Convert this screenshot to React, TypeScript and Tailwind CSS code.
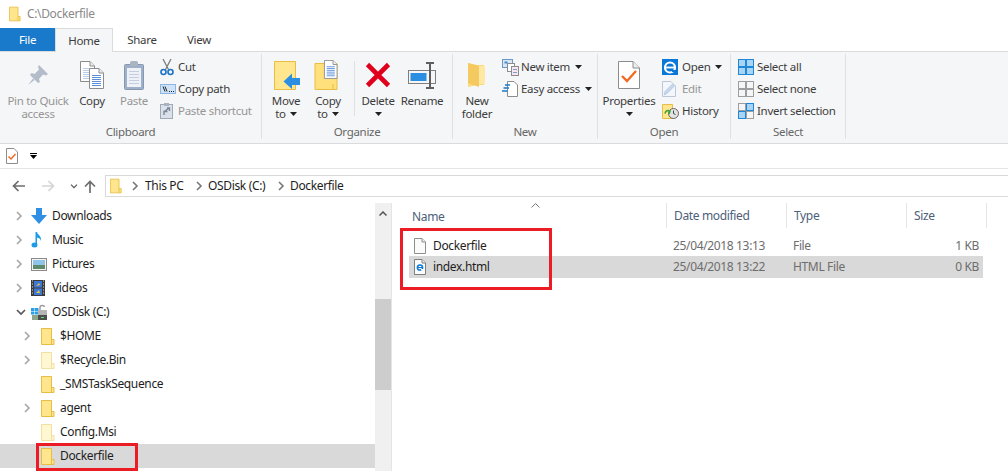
import React from "react";

const Folder = ({ light = false, w = 14, h = 17 }: { light?: boolean; w?: number; h?: number }) => (
  <svg width={w} height={h} viewBox="0 0 14 17" className="shrink-0">
    <path d="M.5 .5H10.5V11.5H13V16.5H.5Z" fill={light ? "#fff6d2" : "#ffe58c"} stroke={light ? "#f2e0a0" : "#e8bd45"} />
    <path d="M10.5 11.5V16.5" stroke={light ? "#f2e0a0" : "#e8bd45"} fill="none" />
  </svg>
);

const Caret = ({ c = "#222" }: { c?: string }) => (
  <svg width="7" height="4" viewBox="0 0 7 4" className="shrink-0"><path d="M0 0H7L3.5 4Z" fill={c} /></svg>
);

const Chev = ({ c = "#a6a6a6" }: { c?: string }) => (
  <svg width="7" height="10" viewBox="0 0 7 10" className="shrink-0"><path d="M1 1L5 5L1 9" fill="none" stroke={c} strokeWidth="1.6" /></svg>
);

const ChevDown = () => (
  <svg width="10" height="7" viewBox="0 0 10 7" className="shrink-0"><path d="M1 1L5 5L9 1" fill="none" stroke="#555" strokeWidth="1.6" /></svg>
);

const Doc = ({ lines = "#5b8fd9" }: { lines?: string }) => (
  <g>
    <path d="M.5.5H10L14.5 5V20.5H.5Z" fill="#fff" stroke="#8c8c8c" />
    <path d="M10 .5V5H14.5" fill="#eee" stroke="#8c8c8c" />
    {[7, 9, 11, 13, 15, 17].map((y) => <path key={y} d={`M3 ${y}.5H12`} stroke={lines} />)}
  </g>
);

const PinIcon = () => (
  <svg width="22" height="22" viewBox="0 0 22 22">
    <path d="M12 1L21 10L19 11.5L16 10.5L12 15L13 18L11 19L3 11L4.5 9L7.5 10L12 5.5L11 3Z" fill="#b3bdca" />
    <path d="M6 14.5L1 21L7.5 16Z" fill="#b3bdca" />
  </svg>
);
const CopyIcon = () => (
  <svg width="25" height="28" viewBox="0 0 25 28">
    <g><Doc lines="#b9cdea" /></g>
    <g transform="translate(9 7)"><Doc /></g>
  </svg>
);
const PasteIcon = () => (
  <svg width="20" height="29" viewBox="0 0 20 29">
    <rect x=".5" y="3.5" width="19" height="25" rx="1" fill="#9fb0c9" stroke="#8798b2" />
    <rect x="3" y="7" width="14" height="19" fill="#eef1f6" />
    {[10, 13, 16, 19, 22].map((y) => <path key={y} d={`M5 ${y}.5H15`} stroke="#c3cfe0" />)}
    <rect x="6" y="0" width="8" height="5" rx="1.5" fill="#aab4c2" />
  </svg>
);
const CutIcon = () => (
  <svg width="14" height="17" viewBox="0 0 14 17">
    <path d="M3 0L8.5 10.5M11 0L5.5 10.5" stroke="#7d7d7d" strokeWidth="1.3" fill="none" />
    <circle cx="3.5" cy="13" r="2.5" fill="none" stroke="#1b72c8" strokeWidth="1.6" />
    <circle cx="10.5" cy="13" r="2.5" fill="none" stroke="#1b72c8" strokeWidth="1.6" />
  </svg>
);
const CopyPathIcon = () => (
  <svg width="16" height="10" viewBox="0 0 16 10">
    <rect x=".5" y=".5" width="15" height="9" fill="#cfe3f8" stroke="#8db7e2" />
    <path d="M3 2.5L5 7.5M5 2.5L7 7.5" stroke="#222" strokeWidth="1" />
    <path d="M9 7.5H10M11 7.5H12M13 7.5H14" stroke="#222" />
  </svg>
);
const PasteShortcutIcon = () => (
  <svg width="13" height="16" viewBox="0 0 13 16">
    <rect x=".5" y="1.5" width="12" height="14" fill="#dbe1ea" stroke="#9fa9b8" />
    <rect x="4" y="0" width="5" height="3" fill="#a9b3c0" />
    <path d="M4 12V8.5H7.5M5 8L8.5 5.5M7 5H9.5V8" stroke="#7a8799" fill="none" strokeWidth="1.4" />
  </svg>
);
const MoveIcon = () => (
  <svg width="27" height="29" viewBox="0 0 27 29">
    <path d="M1.5.5H22.5V28.5H1.5Z" fill="#ffe68f" stroke="#e8bd45" />
    <path d="M27 17H19V12.5L10.5 20.5L19 28V24H27Z" fill="#2b8ee0" />
  </svg>
);
const CopyToIcon = () => (
  <svg width="28" height="30" viewBox="0 0 28 30">
    <path d="M1 3.5H23V29.5H1Z" fill="#ffe07a" stroke="#e8bd45" />
    <path d="M19 24V29.5" stroke="#e8bd45" />
    <g transform="translate(10 0) scale(.9)"><Doc /></g>
  </svg>
);
const DeleteIcon = () => (
  <svg width="26" height="26" viewBox="0 0 26 26"><path d="M2.5 2.5L23.5 23.5M23.5 2.5L2.5 23.5" stroke="#e0001b" strokeWidth="4.6" /></svg>
);
const RenameIcon = () => (
  <svg width="29" height="27" viewBox="0 0 29 27">
    <rect x=".5" y="8.5" width="27" height="13" fill="#f5f6f7" stroke="#7f7f7f" />
    <rect x="2.5" y="11" width="16" height="8" fill="#2b8ee0" />
    <path d="M18 1H26M22 1V26M18 26H26" stroke="#5f5f5f" strokeWidth="2" fill="none" />
  </svg>
);
const NewFolderIcon = () => (
  <svg width="20" height="24" viewBox="0 0 20 24">
    <path d="M1 0L10 2V2H17V22H10L1 24Z" fill="#fbd977" />
    <path d="M1 0L12 3V24L1 20Z" fill="#f4c95f" />
    <path d="M12 3H18V21H12Z" fill="#ffe8a3" />
  </svg>
);
const NewItemIcon = () => (
  <svg width="17" height="17" viewBox="0 0 17 17">
    <rect x=".5" y=".5" width="10" height="8" fill="#d6e7f8" stroke="#6a97c4" />
    <rect x="2.5" y="2.5" width="3" height="2" fill="#4b87c5" />
    <rect x="5.5" y="4.5" width="7" height="8" fill="#fff" stroke="#8c8c8c" />
    <rect x="9.5" y="7.5" width="7" height="9" fill="#f8e6ef" stroke="#8c8c8c" />
    <path d="M11 10.5H15M11 13.5H15" stroke="#7c9ccc" />
  </svg>
);
const EasyIcon = () => (
  <svg width="16" height="16" viewBox="0 0 16 16">
    <path d="M5.5.5H12L15.5 4V15.5H5.5Z" fill="#fff" stroke="#8c8c8c" />
    <path d="M3 4H8M1.5 7H7M0 10H5.5" stroke="#1979ca" strokeWidth="1.3" />
  </svg>
);
const PropIcon = () => (
  <svg width="22" height="28" viewBox="0 0 22 28">
    <path d="M.5.5H15L21.5 7V27.5H.5Z" fill="#fff" stroke="#8c8c8c" />
    <path d="M15 .5V7H21.5" fill="#eee" stroke="#8c8c8c" />
    <path d="M4 15L9 20L18 10" fill="none" stroke="#f26a21" strokeWidth="2.4" />
  </svg>
);
const IeIcon = () => (
  <svg width="16" height="16" viewBox="0 0 16 16">
    <rect width="16" height="16" fill="#0a78d7" />
    <circle cx="8" cy="8.5" r="5" fill="none" stroke="#fff" strokeWidth="2.2" />
    <path d="M3 8.5H13" stroke="#fff" strokeWidth="1.8" />
    <path d="M10 11H16V13H10Z" fill="#0a78d7" />
  </svg>
);
const EditIcon = () => (
  <svg width="14" height="16" viewBox="0 0 14 16">
    <path d="M.5.5H9L13.5 5V15.5H.5Z" fill="#f3f7fd" stroke="#bcc8d8" />
    <path d="M2 14L3 10.5L10.5 3L12.5 5L5 12.5Z" fill="#c5d6ec" stroke="#a7bcd8" strokeWidth=".6" />
  </svg>
);
const HistoryIcon = () => (
  <svg width="17" height="15" viewBox="0 0 17 15">
    <path d="M.5.5H10.5V14.5H.5Z" fill="#ffe68f" stroke="#e8bd45" />
    <circle cx="11.5" cy="9.5" r="5" fill="#e3e3e3" stroke="#666" />
    <path d="M11.5 6.5V9.5L13.5 10.5" stroke="#444" fill="none" />
    <path d="M3 9.5C3.5 6.5 6 6 8 7L7 10" stroke="#3aa535" strokeWidth="1.6" fill="none" />
  </svg>
);
const GridIcon = ({ mode }: { mode: "all" | "none" | "inv" }) => {
  const blue = (on: boolean) => on ? { fill: "#a9d4f5", stroke: "#1f87d8" } : { fill: "#f5f6f7", stroke: "#9e9e9e" };
  const cells: [number, number, boolean][] =
    mode === "all" ? [[0, 0, true], [8, 0, true], [0, 8, true], [8, 8, true]]
    : mode === "none" ? [[0, 0, false], [8, 0, false], [0, 8, false], [8, 8, false]]
    : [[0, 0, false], [8, 0, true], [0, 8, true], [8, 8, false]];
  return (
    <svg width="16" height="16" viewBox="0 0 16 16">
      {cells.map(([x, y, on]) => <rect key={`${x}${y}`} x={x + .5} y={y + .5} width="7" height="7" {...blue(on)} />)}
    </svg>
  );
};
const QuickProp = () => (
  <svg width="12" height="16" viewBox="0 0 12 16">
    <path d="M.5.5H8L11.5 4V15.5H.5Z" fill="#fff" stroke="#8c8c8c" />
    <path d="M2.5 8.5L5 11L9.5 6" fill="none" stroke="#f26a21" strokeWidth="1.5" />
  </svg>
);
const ArrowL = ({ c }: { c: string }) => (
  <svg width="13" height="12" viewBox="0 0 13 12"><path d="M13 6H1.5M6.5 1L1.5 6L6.5 11" fill="none" stroke={c} strokeWidth="1.7" /></svg>
);
const ArrowR = ({ c }: { c: string }) => (
  <svg width="13" height="12" viewBox="0 0 13 12"><path d="M0 6H11.5M6.5 1L11.5 6L6.5 11" fill="none" stroke={c} strokeWidth="1.7" /></svg>
);
const ArrowU = () => (
  <svg width="12" height="13" viewBox="0 0 12 13"><path d="M6 13V1.5M1 6.5L6 1.5L11 6.5" fill="none" stroke="#6d6d6d" strokeWidth="1.7" /></svg>
);
const Downloads = () => (
  <svg width="16" height="16" viewBox="0 0 16 16"><path d="M5 0H11V7H16L8 16L0 7H5Z" fill="#2f8fe3" /></svg>
);
const Music = () => (
  <svg width="12" height="16" viewBox="0 0 12 16">
    <path d="M4.5 0H6C6.5 3 11 4 10 9C9.5 6.5 8 6 6 5.5V13H4.5Z" fill="#1c9be6" />
    <ellipse cx="3.5" cy="13" rx="3" ry="2.5" fill="#1c9be6" />
  </svg>
);
const Pictures = () => (
  <svg width="16" height="13" viewBox="0 0 16 13">
    <rect x=".5" y=".5" width="15" height="12" fill="#f4f4f4" stroke="#8a8a8a" />
    <rect x="2" y="2" width="12" height="5" fill="#8fc3ea" />
    <rect x="2" y="7" width="12" height="4" fill="#5d8a6a" />
  </svg>
);
const Videos = () => (
  <svg width="14" height="16" viewBox="0 0 14 16">
    <rect width="14" height="16" fill="#3b3b3b" />
    <rect x="3" y="1" width="8" height="6.5" fill="#3f78d4" />
    <rect x="3" y="8.5" width="8" height="6.5" fill="#3f78d4" />
    <path d="M5 6L8 3L9 5ZM5 13L8 10L9 13Z" fill="#e9c63c" />
    {[1, 4, 7, 10, 13].map((y) => <path key={y} d={`M1 ${y}H2M12 ${y}H13`} stroke="#ddd" />)}
  </svg>
);
const Disk = () => (
  <svg width="17" height="16" viewBox="0 0 17 16">
    <rect x="0" y="4" width="3.5" height="3" fill="#29a0e8" />
    <rect x="4" y="4" width="3.5" height="3" fill="#29a0e8" />
    <rect x="0" y="7.5" width="3.5" height="3" fill="#29a0e8" />
    <rect x="4" y="7.5" width="3.5" height="3" fill="#29a0e8" />
    <path d="M9 6V3.5C9 1 13.5 1 13.5 3" fill="none" stroke="#9a9a9a" strokeWidth="1.4" />
    <rect x="7" y="6" width="9" height="5" fill="#b5b5b5" />
    <rect x="1" y="11" width="15" height="5" fill="#4d4d4d" />
    <rect x="1" y="11" width="6" height="5" fill="#8da58a" />
    <rect x="10" y="13" width="3" height="1" fill="#5fe07a" />
  </svg>
);
const FileBlank = () => (
  <svg width="12" height="16" viewBox="0 0 12 16">
    <path d="M.5.5H8L11.5 4V15.5H.5Z" fill="#fbfbfb" stroke="#8f8f8f" />
    <path d="M8 .5V4H11.5" fill="#eee" stroke="#8f8f8f" />
  </svg>
);
const FileHtml = () => (
  <svg width="12" height="16" viewBox="0 0 12 16">
    <path d="M.5.5H8L11.5 4V15.5H.5Z" fill="#fbfbfb" stroke="#7f7f7f" />
    <path d="M8 .5V4H11.5" fill="#eee" stroke="#7f7f7f" />
    <circle cx="6" cy="8.5" r="2.6" fill="none" stroke="#0a78d7" strokeWidth="1.5" />
    <path d="M3.5 8.5H8.5" stroke="#0a78d7" />
    <path d="M7 10H9V11.5H7Z" fill="#fbfbfb" />
  </svg>
);

const Big = ({ w, icon, lines, off, caret, ml = 0 }: { w: string; icon: React.ReactNode; lines: string[]; off?: boolean; caret?: boolean | "below"; ml?: number }) => (
  <div className={`flex flex-col items-center shrink-0 ${w} ${off ? "text-[#959595]" : "text-[#3c3c3c]"}`} style={ml ? { marginLeft: ml } : undefined}>
    <div className="h-[38px] flex items-center justify-center">{icon}</div>
    {lines.map((l, i) => (
      <div key={l} className="h-[13px] leading-[13px] whitespace-nowrap flex items-center gap-1">
        {l}{caret === true && i === lines.length - 1 && <Caret />}
      </div>
    ))}
    {caret === "below" && <div className="h-[13px] flex items-center"><Caret /></div>}
  </div>
);

const Small = ({ icon, label, off, caret, iw = 19 }: { icon: React.ReactNode; label: string; off?: boolean; caret?: boolean; iw?: number }) => (
  <div className={`h-[22px] flex items-center whitespace-nowrap ${off ? "text-[#959595]" : "text-[#3c3c3c]"}`}>
    <div className="flex items-center shrink-0" style={{ width: iw }}>{icon}</div>
    <span>{label}</span>
    {caret && <span className="ml-[5px]"><Caret /></span>}
  </div>
);

const Group = ({ w, label, children, sep = true }: { w: string; label: string; children: React.ReactNode; sep?: boolean }) => (
  <div className={`${w} shrink-0 flex flex-col h-[85px] mt-[2px] ${sep ? "border-r border-[#dfe0e1]" : ""}`}>
    <div className="h-[71px] flex pt-[2px]">{children}</div>
    <div className="text-center text-[#666] leading-[14px] h-[14px] mt-[3px]">{label}</div>
  </div>
);

const NavRow = ({ level, chev, open, icon, label, sel }: { level: 1 | 2; chev?: boolean; open?: boolean; icon: React.ReactNode; label: string; sel?: boolean }) => (
  <div className={`h-6 flex items-center text-[#1e1e1e] whitespace-nowrap ${sel ? "bg-[#d9d9d9]" : ""}`}>
    <div className={`${level === 1 ? "w-[31px] pl-[16px]" : "w-[41px] pl-[24px]"} shrink-0 flex items-center`}>
      {chev && (open ? <ChevDown /> : <Chev />)}
    </div>
    <div className={`${level === 1 ? "w-[21px]" : "w-[19px]"} shrink-0 flex items-center`}>{icon}</div>
    <span>{label}</span>
  </div>
);

const FileRow = ({ icon, name, date, type, size, sel }: { icon: React.ReactNode; name: string; date: string; type: string; size: string; sel?: boolean }) => (
  <div className={`h-[22px] flex items-center w-[574px] ${sel ? "bg-[#d9d9d9]" : ""}`}>
    <div className="w-[257px] flex items-center pl-[5px] text-[#1e1e1e]">
      <div className="w-[19px] flex items-center">{icon}</div>{name}
    </div>
    <div className="w-[120px] pl-[7px] text-[#6d6d6d]">{date}</div>
    <div className="w-[120px] pl-[7px] text-[#6d6d6d]">{type}</div>
    <div className="w-[73px] text-right text-[#6d6d6d]">{size}</div>
  </div>
);

const Head = ({ w, label }: { w: string; label: string }) => (
  <div className={`${w} h-[25px] pl-[7px] flex items-center border-r border-[#e5e5e5] text-[#4c607a]`}>{label}</div>
);

export default function App() {
  return (
    <div className="relative w-[1008px] h-[471px] overflow-hidden bg-white flex flex-col font-['Noto_Sans',sans-serif] text-[11.5px] tracking-[-0.3px] leading-none">
      <div className="h-[28px] flex items-center pl-[9px] gap-[6px] text-[#8a8a8a] text-[12px] tracking-[-0.35px]">
        <Folder w={12} h={16} />
        <span>C:\Dockerfile</span>
      </div>

      <div className="h-[24px] flex border-b border-[#dadbdc] text-[#3c3c3c]">
        <div className="w-[55px] h-[23px] bg-[#1979ca] text-white flex items-center justify-center">File</div>
        <div className="w-[58px] h-[24px] bg-[#f5f6f7] border border-b-0 border-[#dadbdc] flex items-center justify-center">Home</div>
        <div className="w-[58px] h-[23px] flex items-center justify-center">Share</div>
        <div className="w-[56px] h-[23px] flex items-center justify-center">View</div>
      </div>

      <div className="h-[92px] bg-[#f5f6f7] border-b border-[#dadbdc] flex items-start">
        <Group w="w-[262px]" label="Clipboard">
          <Big w="w-[76px]" off icon={<PinIcon />} lines={["Pin to Quick", "access"]} />
          <Big w="w-[32px]" icon={<CopyIcon />} lines={["Copy"]} />
          <Big w="w-[36px]" ml={8} off icon={<PasteIcon />} lines={["Paste"]} />
          <div className="ml-[8px] flex flex-col">
            <Small iw={18} icon={<CutIcon />} label="Cut" />
            <Small iw={18} icon={<CopyPathIcon />} label="Copy path" />
            <Small iw={18} off icon={<PasteShortcutIcon />} label="Paste shortcut" />
          </div>
        </Group>
        <Group w="w-[191px]" label="Organize">
          <Big w="w-[42px]" ml={3} icon={<MoveIcon />} lines={["Move", "to"]} caret />
          <Big w="w-[42px]" icon={<CopyToIcon />} lines={["Copy", "to"]} caret />
          <div className="w-px h-[55px] bg-[#dfe0e1] mt-[5px] ml-[5px] shrink-0" />
          <Big w="w-[44px]" ml={1} icon={<DeleteIcon />} lines={["Delete"]} caret="below" />
          <Big w="w-[44px]" icon={<RenameIcon />} lines={["Rename"]} />
        </Group>
        <Group w="w-[145px]" label="New">
          <Big w="w-[46px]" ml={1} icon={<NewFolderIcon />} lines={["New", "folder"]} />
          <div className="ml-[2px] flex flex-col">
            <Small icon={<NewItemIcon />} label="New item" caret />
            <Small icon={<EasyIcon />} label="Easy access" caret />
          </div>
        </Group>
        <Group w="w-[133px]" label="Open">
          <Big w="w-[60px]" ml={1} icon={<PropIcon />} lines={["Properties"]} caret="below" />
          <div className="ml-[3px] flex flex-col">
            <Small iw={20} icon={<IeIcon />} label="Open" caret />
            <Small iw={20} off icon={<EditIcon />} label="Edit" />
            <Small iw={20} icon={<HistoryIcon />} label="History" />
          </div>
        </Group>
        <Group w="w-[115px]" label="Select">
          <div className="ml-[7px] flex flex-col">
            <Small icon={<GridIcon mode="all" />} label="Select all" />
            <Small icon={<GridIcon mode="none" />} label="Select none" />
            <Small icon={<GridIcon mode="inv" />} label="Invert selection" />
          </div>
        </Group>
      </div>

      <div className="h-[25px] border-b border-[#e5e5e5] flex items-center pl-[6px]">
        <QuickProp />
        <div className="ml-[12px] flex flex-col items-center gap-[1px]">
          <div className="w-[7px] h-px bg-black" />
          <Caret c="#000" />
        </div>
      </div>

      <div className="h-[34px] flex items-start pt-[6px]">
        <div className="w-[105px] h-[22px] flex items-center pl-[12px] shrink-0">
          <ArrowL c="#6d6d6d" />
          <span className="ml-[17px]"><ArrowR c="#d5d5d5" /></span>
          <span className="ml-[14px] scale-75"><ChevDown /></span>
          <span className="ml-[5px]"><ArrowU /></span>
        </div>
        <div className="flex-1 h-[22px] border border-[#d9d9d9] border-r-0 flex items-center pl-[4px] text-[#1e1e1e] text-[12px] tracking-[-0.35px]">
          <Folder w={12} h={16} />
          <span className="ml-[10px]"><Chev c="#777" /></span>
          <span className="ml-[6px] w-[51px]">This PC</span>
          <Chev c="#777" />
          <span className="ml-[5px] w-[70px]">OSDisk (C:)</span>
          <Chev c="#777" />
          <span className="ml-[5px]">Dockerfile</span>
        </div>
      </div>

      <div className="flex-1 min-h-0 flex">
        <div className="w-[375px] shrink-0 pt-px text-[12px] tracking-[-0.35px]">
          <NavRow level={1} chev icon={<Downloads />} label="Downloads" />
          <NavRow level={1} chev icon={<Music />} label="Music" />
          <NavRow level={1} chev icon={<Pictures />} label="Pictures" />
          <NavRow level={1} chev icon={<Videos />} label="Videos" />
          <NavRow level={1} chev open icon={<Disk />} label="OSDisk (C:)" />
          <NavRow level={2} chev icon={<Folder />} label="$HOME" />
          <NavRow level={2} chev icon={<Folder light />} label="$Recycle.Bin" />
          <NavRow level={2} icon={<Folder />} label="_SMSTaskSequence" />
          <NavRow level={2} chev icon={<Folder />} label="agent" />
          <NavRow level={2} icon={<Folder light />} label="Config.Msi" />
          <NavRow level={2} icon={<Folder />} label="Dockerfile" sel />
        </div>

        <div className="w-[16px] shrink-0 bg-[#f0f0f0] flex flex-col items-center">
          <div className="h-[96px] w-full flex justify-center pt-[8px]">
            <svg width="8" height="5" viewBox="0 0 8 5"><path d="M.5 4.5L4 1L7.5 4.5" fill="none" stroke="#555" strokeWidth="1.5" /></svg>
          </div>
          <div className="h-[91px] w-full bg-[#cdcdcd]" />
        </div>

        <div className="flex-1 border-l border-[#e5e5e5] pl-[17px] text-[12px] tracking-[-0.35px]">
          <div className="flex h-[25px] relative">
            <div className="w-[258px] h-[25px] pl-[3px] flex items-center border-r border-[#e5e5e5] text-[#4c607a] pt-[2px]">Name</div>
            <Head w="w-[120px]" label="Date modified" />
            <Head w="w-[120px]" label="Type" />
            <Head w="w-[80px]" label="Size" />
            <svg width="9" height="5" viewBox="0 0 9 5" className="absolute left-[122px] top-[0px]"><path d="M.5 4.5L4.5 .5L8.5 4.5" fill="none" stroke="#777" /></svg>
          </div>
          <div className="pt-[6px]">
            <div className="pt-px h-[22px]">
              <FileRow icon={<FileBlank />} name="Dockerfile" date="25/04/2018 13:13" type="File" size="1 KB" />
            </div>
            <FileRow icon={<FileHtml />} name="index.html" date="25/04/2018 13:22" type="HTML File" size="0 KB" sel />
          </div>
        </div>
      </div>

      <div className="absolute left-[400px] top-[228px] w-[152px] h-[62px] border-[3px] border-[#ec1c24]" />
      <div className="absolute left-[36px] top-[443px] w-[102px] h-[28px] border-[3px] border-[#ec1c24]" />
    </div>
  );
}
